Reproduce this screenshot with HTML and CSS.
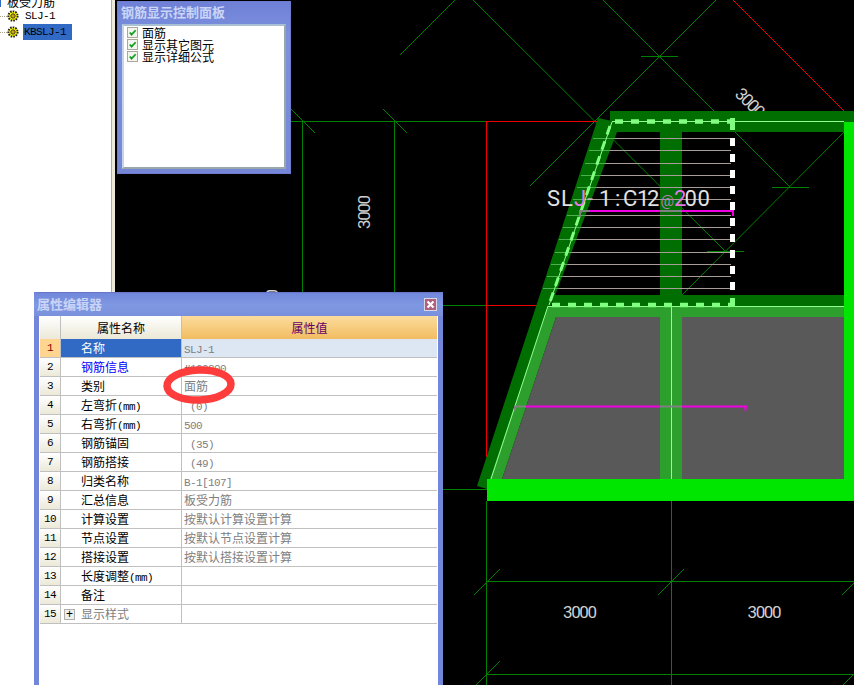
FILE: index.html
```html
<!DOCTYPE html>
<html lang="zh-CN">
<head>
<meta charset="utf-8">
<title>属性编辑器</title>
<link rel="stylesheet" href="styles.css">
</head>
<body>
<aside class="tree">
  <div class="tree-root"><span class="tree-mark"></span>板受力筋</div>
  <div class="tree-item">
    <span class="dots"></span>
    <svg class="gear" viewBox="0 0 12 12"><circle cx="6" cy="6" r="4.6" fill="#ffff00" stroke="#222" stroke-width="2" stroke-dasharray="1.6 1"/><circle cx="6" cy="6" r="2.2" fill="#d8a800" stroke="#333"/></svg>
    <span class="tree-label lat">SLJ-1</span>
  </div>
  <div class="tree-item">
    <span class="dots"></span>
    <svg class="gear" viewBox="0 0 12 12"><circle cx="6" cy="6" r="4.6" fill="#ffff00" stroke="#222" stroke-width="2" stroke-dasharray="1.6 1"/><circle cx="6" cy="6" r="2.2" fill="#d8a800" stroke="#333"/></svg>
    <span class="tree-label selected lat">KBSLJ-1</span>
  </div>
</aside>
<div class="gutter"></div>

<svg class="cad" viewBox="115 0 739 685" width="739" height="685">
  <!-- axis lines -->
  <g class="thin">
    <line x1="291" y1="121.5" x2="487" y2="121.5"/>
    <line x1="443" y1="305.5" x2="487" y2="305.5"/>
    <line x1="443" y1="489.5" x2="487" y2="489.5"/>
    <line x1="302.5" y1="122" x2="302.5" y2="295"/>
    <line x1="394.5" y1="122" x2="394.5" y2="295"/>
    <line x1="486.5" y1="501" x2="486.5" y2="685"/>
    <line x1="671.5" y1="501" x2="671.5" y2="685"/>
    <line x1="487" y1="581.5" x2="854" y2="581.5"/>
    <line x1="487" y1="674.5" x2="854" y2="674.5"/>
    <line x1="400" y1="55" x2="455" y2="0"/>
    <line x1="473" y1="0" x2="727" y2="253"/>
    <line x1="603" y1="0" x2="790" y2="187"/>
    <line x1="716" y1="0" x2="530" y2="186"/>
    <line x1="854" y1="122" x2="682" y2="295"/>
    <line x1="641" y1="56.5" x2="678" y2="56.5"/>
    <line x1="772" y1="187.5" x2="809" y2="187.5"/>
    <line x1="707" y1="251.5" x2="744" y2="251.5"/>
    <line x1="289" y1="107" x2="315" y2="133"/>
    <line x1="383" y1="109" x2="407" y2="133"/>
    <line x1="474" y1="595" x2="500" y2="569"/>
    <line x1="658" y1="595" x2="684" y2="569"/>
    <line x1="842" y1="595" x2="856" y2="581"/>
    <line x1="476" y1="685" x2="500" y2="661"/>
    <line x1="843" y1="685" x2="856" y2="672"/>
  </g>
  <g class="red">
    <line x1="486.5" y1="121.5" x2="598" y2="121.5"/>
    <line x1="486.5" y1="121" x2="486.5" y2="457"/>
    <line x1="487" y1="305.5" x2="538" y2="305.5"/>
    <line x1="733" y1="0" x2="845" y2="112"/>
  </g>
  <g class="dim">
    <text x="580" y="618" text-anchor="middle" textLength="34">3000</text>
    <text x="764.5" y="618" text-anchor="middle" textLength="34">3000</text>
    <text transform="translate(370 212) rotate(-90)" text-anchor="middle" textLength="34">3000</text>
    <text transform="translate(278 306) rotate(-90)" text-anchor="middle" textLength="34">3000</text>
    <text transform="translate(746 107) rotate(45)" text-anchor="middle" textLength="34">3000</text>
  </g>

  <!-- lower slab -->
  <polygon class="slab" points="556,317 660,317 660,479 502,479"/>
  <rect class="slab" x="682" y="317" width="162" height="162"/>
  <!-- dark beams -->
  <polygon class="dark" points="598,118 617,122 617,132 551,306 487,489 477,486"/>
  <rect class="dark" x="610" y="111" width="244" height="21"/>
  <rect class="dark" x="553" y="295" width="291" height="11"/>
  <rect class="dark" x="660" y="132" width="22" height="163"/>
  <!-- mid beams -->
  <polygon class="mid" points="548,306 844,306 844,317 556,317 502,479 490,479"/>
  <rect class="mid" x="660" y="306" width="22" height="173"/>

  <!-- rebar lines -->
  <g class="bar-on-beam">
    <line x1="593" y1="138.5" x2="615" y2="138.5"/>
    <line x1="589" y1="150.5" x2="610" y2="150.5"/>
    <line x1="585" y1="163.5" x2="605" y2="163.5"/>
    <line x1="581" y1="175.5" x2="601" y2="175.5"/>
    <line x1="577" y1="187.5" x2="597" y2="187.5"/>
    <line x1="573" y1="199.5" x2="592" y2="199.5"/>
    <line x1="567" y1="215.5" x2="586" y2="215.5"/>
    <line x1="563" y1="227.5" x2="582" y2="227.5"/>
    <line x1="559" y1="239.5" x2="577" y2="239.5"/>
    <line x1="555" y1="252.5" x2="572" y2="252.5"/>
    <line x1="551" y1="264.5" x2="568" y2="264.5"/>
    <line x1="547" y1="276.5" x2="563" y2="276.5"/>
    <line x1="543" y1="288.5" x2="559" y2="288.5"/>
  </g>
  <g class="bar">
    <line x1="615" y1="138.5" x2="731" y2="138.5"/>
    <line x1="610" y1="150.5" x2="731" y2="150.5"/>
    <line x1="605" y1="163.5" x2="731" y2="163.5"/>
    <line x1="601" y1="175.5" x2="731" y2="175.5"/>
    <line x1="597" y1="187.5" x2="731" y2="187.5"/>
    <line x1="592" y1="199.5" x2="731" y2="199.5"/>
    <line x1="586" y1="215.5" x2="731" y2="215.5"/>
    <line x1="582" y1="227.5" x2="731" y2="227.5"/>
    <line x1="577" y1="239.5" x2="731" y2="239.5"/>
    <line x1="572" y1="252.5" x2="731" y2="252.5"/>
    <line x1="568" y1="264.5" x2="731" y2="264.5"/>
    <line x1="563" y1="276.5" x2="731" y2="276.5"/>
    <line x1="559" y1="288.5" x2="731" y2="288.5"/>
  </g>

  <!-- pale outlines -->
  <g class="pale">
    <line x1="612" y1="121.5" x2="844" y2="121.5"/>
    <line x1="612" y1="122" x2="549" y2="305"/>
    <line x1="548" y1="306" x2="491" y2="479"/>
    <line x1="548" y1="306.5" x2="844" y2="306.5"/>
    <line x1="671.5" y1="306" x2="671.5" y2="479"/>
  </g>
  <g class="pale-dash">
    <line x1="615" y1="121.5" x2="730" y2="121.5"/>
    <line x1="552" y1="305" x2="730" y2="305"/>
    <line class="slant" x1="610" y1="126" x2="550" y2="302"/>
  </g>
  <rect class="pale-fill" x="730" y="118" width="5" height="12"/>
  <rect class="pale-fill" x="730" y="298" width="5" height="9"/>
  <line class="white-dash" x1="732.5" y1="138" x2="732.5" y2="290"/>

  <!-- magenta leaders -->
  <g class="mag">
    <line x1="590" y1="211" x2="660" y2="211"/>
    <line x1="682" y1="211" x2="734" y2="211"/>
    <line x1="733" y1="211" x2="733" y2="216"/>
    <line x1="526" y1="406.5" x2="660" y2="406.5"/>
    <line x1="682" y1="406.5" x2="747" y2="406.5"/>
    <line x1="745.5" y1="406" x2="745.5" y2="411"/>
  </g>
  <g class="mag-dim">
    <polyline points="580,217 580,211 590,211"/>
    <line x1="660" y1="211" x2="682" y2="211"/>
    <polyline points="515,411 515,406.5 526,406.5"/>
    <line x1="660" y1="406.5" x2="682" y2="406.5"/>
  </g>

  <!-- bright frame -->
  <rect class="bright" x="487" y="479" width="367" height="22"/>
  <rect class="bright" x="844" y="122" width="10" height="357"/>

  <text class="label" y="205.5"><tspan x="547 561">SL</tspan><tspan class="pink" x="574">J</tspan><tspan class="grey" x="587">-</tspan><tspan x="599 615 623 637 647">1:C12</tspan><tspan class="mauve" x="660.5">@</tspan><tspan class="pink" x="674">2</tspan><tspan x="684.5 697.5">00</tspan></text>
</svg>

<section class="panel">
  <h2 class="panel-title">钢筋显示控制面板</h2>
  <div class="panel-body">
    <label class="check"><span class="box"><svg viewBox="0 0 10 10"><path d="M2 5l2 2.4L8.5 2.5" fill="none" stroke="#12a020" stroke-width="2"/></svg></span>面筋</label>
    <label class="check"><span class="box"><svg viewBox="0 0 10 10"><path d="M2 5l2 2.4L8.5 2.5" fill="none" stroke="#12a020" stroke-width="2"/></svg></span>显示其它图元</label>
    <label class="check"><span class="box"><svg viewBox="0 0 10 10"><path d="M2 5l2 2.4L8.5 2.5" fill="none" stroke="#12a020" stroke-width="2"/></svg></span>显示详细公式</label>
  </div>
</section>

<section class="editor">
  <header class="editor-title">
    <h2>属性编辑器</h2>
    <span class="close"><svg viewBox="0 0 9 9"><path d="M1.5 1.5l6 6M7.5 1.5l-6 6" stroke="#fff" stroke-width="2.2"/></svg></span>
  </header>
  <div class="grid">
    <div class="row head"><div class="num"></div><div class="name">属性名称</div><div class="val">属性值</div></div>
    <div class="row current"><div class="num lat">1</div><div class="name">名称</div><div class="val"><span class="lat">SLJ-1</span></div></div>
    <div class="row"><div class="num lat">2</div><div class="name link">钢筋信息</div><div class="val"><span class="lat"><b class="rebar">#</b>100200</span></div></div>
    <div class="row"><div class="num lat">3</div><div class="name">类别</div><div class="val">面筋</div></div>
    <div class="row"><div class="num lat">4</div><div class="name">左弯折<span class="lat">(mm)</span></div><div class="val"><span class="lat">&nbsp;(0)</span></div></div>
    <div class="row"><div class="num lat">5</div><div class="name">右弯折<span class="lat">(mm)</span></div><div class="val"><span class="lat">500</span></div></div>
    <div class="row"><div class="num lat">6</div><div class="name">钢筋锚固</div><div class="val"><span class="lat">&nbsp;(35)</span></div></div>
    <div class="row"><div class="num lat">7</div><div class="name">钢筋搭接</div><div class="val"><span class="lat">&nbsp;(49)</span></div></div>
    <div class="row"><div class="num lat">8</div><div class="name">归类名称</div><div class="val"><span class="lat">B-1[107]</span></div></div>
    <div class="row"><div class="num lat">9</div><div class="name">汇总信息</div><div class="val">板受力筋</div></div>
    <div class="row"><div class="num lat">10</div><div class="name">计算设置</div><div class="val">按默认计算设置计算</div></div>
    <div class="row"><div class="num lat">11</div><div class="name">节点设置</div><div class="val">按默认节点设置计算</div></div>
    <div class="row"><div class="num lat">12</div><div class="name">搭接设置</div><div class="val">按默认搭接设置计算</div></div>
    <div class="row"><div class="num lat">13</div><div class="name">长度调整<span class="lat">(mm)</span></div><div class="val"></div></div>
    <div class="row"><div class="num lat">14</div><div class="name">备注</div><div class="val"></div></div>
    <div class="row"><div class="num lat">15</div><div class="name muted"><span class="plus">+</span>显示样式</div><div class="val"></div></div>
  </div>
  <svg class="ring" viewBox="0 0 76 44" width="76" height="44"><ellipse cx="38" cy="22" rx="32" ry="15" transform="rotate(-2 38 22)"/></svg>
</section>
</body>
</html>
```
FILE: styles.css
```css
* { box-sizing: border-box; }
html, body { margin: 0; padding: 0; }
body {
  position: relative;
  display: flex;
  width: 854px;
  height: 685px;
  overflow: hidden;
  background: #000;
  font: 12px/12px "Noto Sans CJK SC", "Liberation Sans", sans-serif;
  color: #000;
}
h2 { margin: 0; font: inherit; }
.lat { font-family: "Liberation Mono", monospace; font-size: 11px; letter-spacing: -.6px; }

/* tree */
.tree {
  flex: none;
  width: 112px;
  height: 100%;
  background: #fff;
  border-right: 1px solid #9db0c4;
}
.tree-root {
  display: flex;
  height: 8px;
  overflow: hidden;
  line-height: 4px;
}
.tree-mark { width: 1px; height: 7px; margin-right: 6px; background: #316ac5; }
.tree-item { display: flex; align-items: center; height: 16px; }
.dots { width: 7px; border-top: 1px dotted #a89f90; }
.gear { width: 12px; height: 12px; margin-right: 5px; flex: none; }
.tree-label { padding: 0 1px; line-height: 16px; height: 16px; }
.selected { background: #316ac5; color: #000; width: 49px; margin-left: -1px; }
.gutter { flex: none; width: 3px; background: #ece9d8; }

/* drawing */
.cad { flex: none; display: block; }
.thin line { stroke: #008000; stroke-width: 1; }
.red line { stroke: #f00000; stroke-width: 1; }
.dim text { fill: #d0d0d0; font: 17px Roboto, sans-serif; }
.slab { fill: #595959; }
.dark { fill: #006e00; }
.mid { fill: #2c9f2c; }
.bright { fill: #00e600; }
.bar line { stroke: #a89c96; stroke-width: 1; }
.bar-on-beam line { stroke: #4fae4f; stroke-width: 1; }
.pale line { stroke: #90ff90; stroke-width: 1; }
.pale-dash line { stroke: #80ff80; stroke-width: 4.5; stroke-dasharray: 8 8; }
.pale-dash .slant { stroke-width: 3; stroke-dasharray: 9 7; }
.pale-fill { fill: #80ff80; }
.white-dash { stroke: #fff; stroke-width: 5; stroke-dasharray: 8 8; }
.mag line { stroke: #f000e0; stroke-width: 2; }
.mag-dim line, .mag-dim polyline { stroke: #808080; stroke-width: 2; fill: none; }
.label { fill: #e2e2e2; font: 22px Roboto, sans-serif; }
.pink { fill: #e878e8; }
.grey { fill: #c0b0c0; }
.mauve { fill: #b080b8; font-size: 15px; }

/* floating panel */
.panel {
  position: absolute;
  left: 117px;
  top: 1px;
  width: 174px;
  height: 173px;
  display: flex;
  flex-direction: column;
  background: linear-gradient(#6f80d6, #7c92de 20%, #7687d8);
  border: 1px solid #6c7cd0;
  padding: 0 4px 4px;
}
.panel-title {
  height: 22px;
  margin-left: -1px;
  line-height: 20px;
  font-size: 13px;
  font-weight: 700;
  color: #c9d4f6;
}
.panel-body {
  flex: 1;
  background: #fff;
  border: 2px solid #9aa7a8;
  border-left-color: #c6d4e8;
  border-top-color: #a9c0d4;
  padding: 1px 3px;
}
.check { display: flex; align-items: flex-start; height: 12px; font-size: 12px; line-height: 12px; }
.box {
  flex: none;
  width: 11px;
  height: 11px;
  margin-right: 4px;
  border: 1px solid #a8a89c;
  background: #f4f4ee;
}
.box svg { display: block; width: 9px; height: 9px; }

/* property editor */
.editor {
  position: absolute;
  left: 34px;
  top: 292px;
  width: 409px;
  height: 400px;
  background: #fff;
  border-top: 1px solid #6677cc;
  border-left: 5px solid #7286da;
  border-right: 5px solid #7286da;
}
.editor-title {
  display: flex;
  align-items: center;
  justify-content: space-between;
  height: 23px;
  margin: 0 -5px;
  padding: 0 6px 0 3px;
  background: linear-gradient(#7186da, #7f98e2 50%, #7a90dc);
  color: #c9d4f6;
  font-size: 13px;
  font-weight: 700;
}
.editor-title h2 { margin-top: -2px; }
.close {
  display: flex;
  align-items: center;
  justify-content: center;
  width: 13px;
  height: 13px;
  background: #b0607c;
  border: 1px solid #d8d8e8;
}
.close svg { width: 9px; height: 9px; }
.grid { margin: 0 1px; width: 397px; }
.row {
  display: flex;
  height: 19px;
  border-bottom: 1px solid #c0c0c0;
  color: #000;
}
.row > div { line-height: 18px; }
.num {
  flex: none;
  width: 21px;
  text-align: center;
  background: linear-gradient(#fff, #ece9d8);
  border-right: 1px solid #c0c0c0;
}
.name {
  flex: none;
  width: 121px;
  padding-left: 20px;
  border-right: 1px solid #c0c0c0;
  white-space: nowrap;
}
.val {
  flex: 1;
  padding-left: 2px;
  color: #808080;
  white-space: nowrap;
}
.rebar { color: #333; font-weight: 400; }
.head { height: 23px; border-bottom: 0; }
.head > div { line-height: 23px; }
.head .name {
  padding: 0;
  text-align: center;
  background: linear-gradient(#fff, #ebe8d6);
}
.head .val {
  padding: 0;
  text-align: center;
  color: #660066;
  background: linear-gradient(#fbdc9e, #f2bc60);
}
.current .num { background: #ffd590; color: #800000; }
.current .name { background: #316ac5; color: #fff; }
.current .val { background: #dde6f3; }
.link { color: #0000ff; }
.muted { color: #808080; position: relative; }
.plus {
  position: absolute;
  left: 3px;
  top: 4px;
  width: 11px;
  height: 11px;
  border: 1px solid #b0b0b0;
  background: #f0f0ea;
  color: #000;
  font: 12px/9px "Liberation Sans", sans-serif;
  text-align: center;
}
.ring {
  position: absolute;
  left: 122px;
  top: 70px;
}
.ring ellipse { fill: none; stroke: #ff3c3c; stroke-width: 7.5; }
```
